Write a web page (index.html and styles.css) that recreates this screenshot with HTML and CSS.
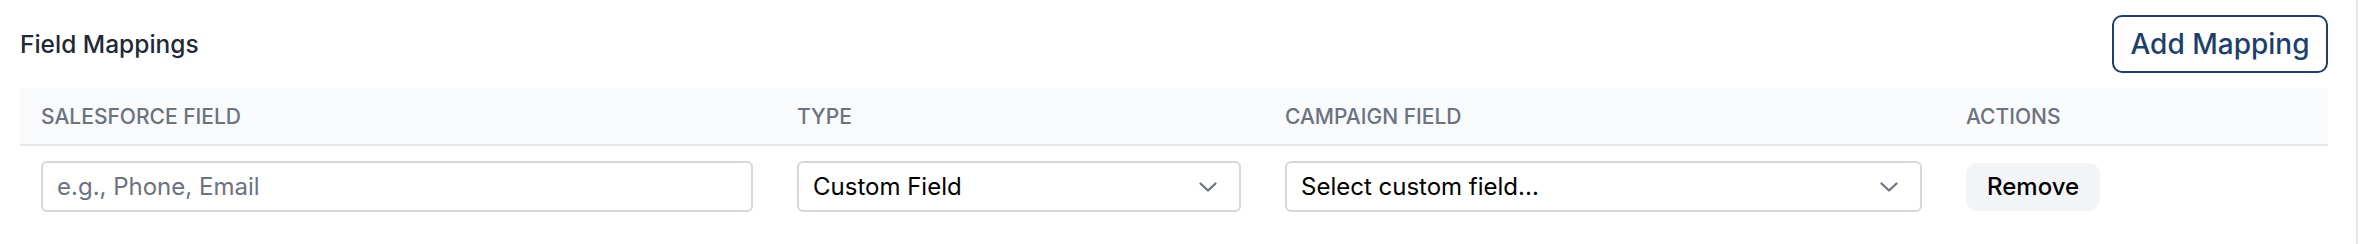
FILE: index.html
```html
<!DOCTYPE html>
<html lang="en">
<head>
<meta charset="utf-8">
<title>Field Mappings</title>
<link rel="stylesheet" href="styles.css">
</head>
<body>
<div class="panel">
  <div class="topbar">
    <h3 class="title">Field Mappings</h3>
    <button class="btn-outline" type="button">Add Mapping</button>
  </div>
  <div class="table">
    <div class="thead">
      <div class="th">Salesforce Field</div>
      <div class="th">Type</div>
      <div class="th">Campaign Field</div>
      <div class="th">Actions</div>
    </div>
    <div class="tr">
      <div class="td">
        <input class="input" type="text" placeholder="e.g., Phone, Email">
      </div>
      <div class="td">
        <div class="select-wrap">
          <select class="select">
            <option>Custom Field</option>
          </select>
          <svg class="chev" viewBox="0 0 18 10" width="18" height="10"><path d="M1.5 1.5 L9 8.5 L16.5 1.5" fill="none" stroke="#6b7280" stroke-width="2.2" stroke-linecap="round" stroke-linejoin="round"/></svg>
        </div>
      </div>
      <div class="td">
        <div class="select-wrap">
          <select class="select">
            <option>Select custom field...</option>
          </select>
          <svg class="chev" viewBox="0 0 18 10" width="18" height="10"><path d="M1.5 1.5 L9 8.5 L16.5 1.5" fill="none" stroke="#6b7280" stroke-width="2.2" stroke-linecap="round" stroke-linejoin="round"/></svg>
        </div>
      </div>
      <div class="td">
        <button class="btn-gray" type="button">Remove</button>
      </div>
    </div>
  </div>
</div>
</body>
</html>
```
FILE: styles.css
```css
* { box-sizing: border-box; }
html, body { margin: 0; padding: 0; background: #fff; }
body {
  font-family: Inter, "Noto Sans", sans-serif;
  color: #111;
}
.panel {
  width: 2358px;
  min-height: 244px;
  border-right: 2px solid #e5e7eb;
  padding: 15px 28px 0 20px;
}
.topbar {
  display: flex;
  align-items: center;
  justify-content: space-between;
  height: 58px;
}
.title {
  margin: 0;
  font-size: 24.5px;
  font-weight: 500;
  color: #1f2937;
}
.btn-outline {
  font-family: inherit;
  font-size: 28px;
  font-weight: 500;
  color: #1e3f6d;
  background: #fff;
  border: 2px solid #1e3f6d;
  border-radius: 10px;
  height: 58px;
  width: 216px;
  padding: 0;
  cursor: pointer;
}
.table { margin-top: 15px; }
.thead, .tr {
  display: grid;
  grid-template-columns: 756px 488px 681px 383px;
}
.thead {
  background: #f9fafb;
  height: 58px;
  border-bottom: 2px solid #e7e8ec;
}
.th {
  display: flex;
  align-items: center;
  padding: 0 23px 0 21px;
  font-size: 21px;
  font-weight: 500;
  letter-spacing: 0;
  text-transform: uppercase;
  color: #6b7280;
}
.tr { padding: 15px 0; }
.td {
  display: flex;
  align-items: center;
  padding: 0 23px 0 21px;
}
.input, .select {
  font-family: inherit;
  font-size: 24px;
  width: 100%;
  height: 51px;
  border: 2px solid #d4d7dd;
  border-radius: 6px;
  background: #fff;
  outline: none;
}
.input {
  padding: 0 14px;
  color: #111;
}
.input::placeholder { color: #6b7280; }
.select-wrap {
  position: relative;
  width: 100%;
}
.select {
  appearance: none;
  -webkit-appearance: none;
  padding: 0 60px 0 14px;
  color: #000;
}
.chev {
  position: absolute;
  right: 24px;
  top: 21px;
  pointer-events: none;
}
.btn-gray {
  font-family: inherit;
  font-size: 24px;
  font-weight: 500;
  color: #000;
  background: #f3f4f6;
  border: none;
  border-radius: 12px;
  height: 48px;
  padding: 0 21px;
  cursor: pointer;
}
```
